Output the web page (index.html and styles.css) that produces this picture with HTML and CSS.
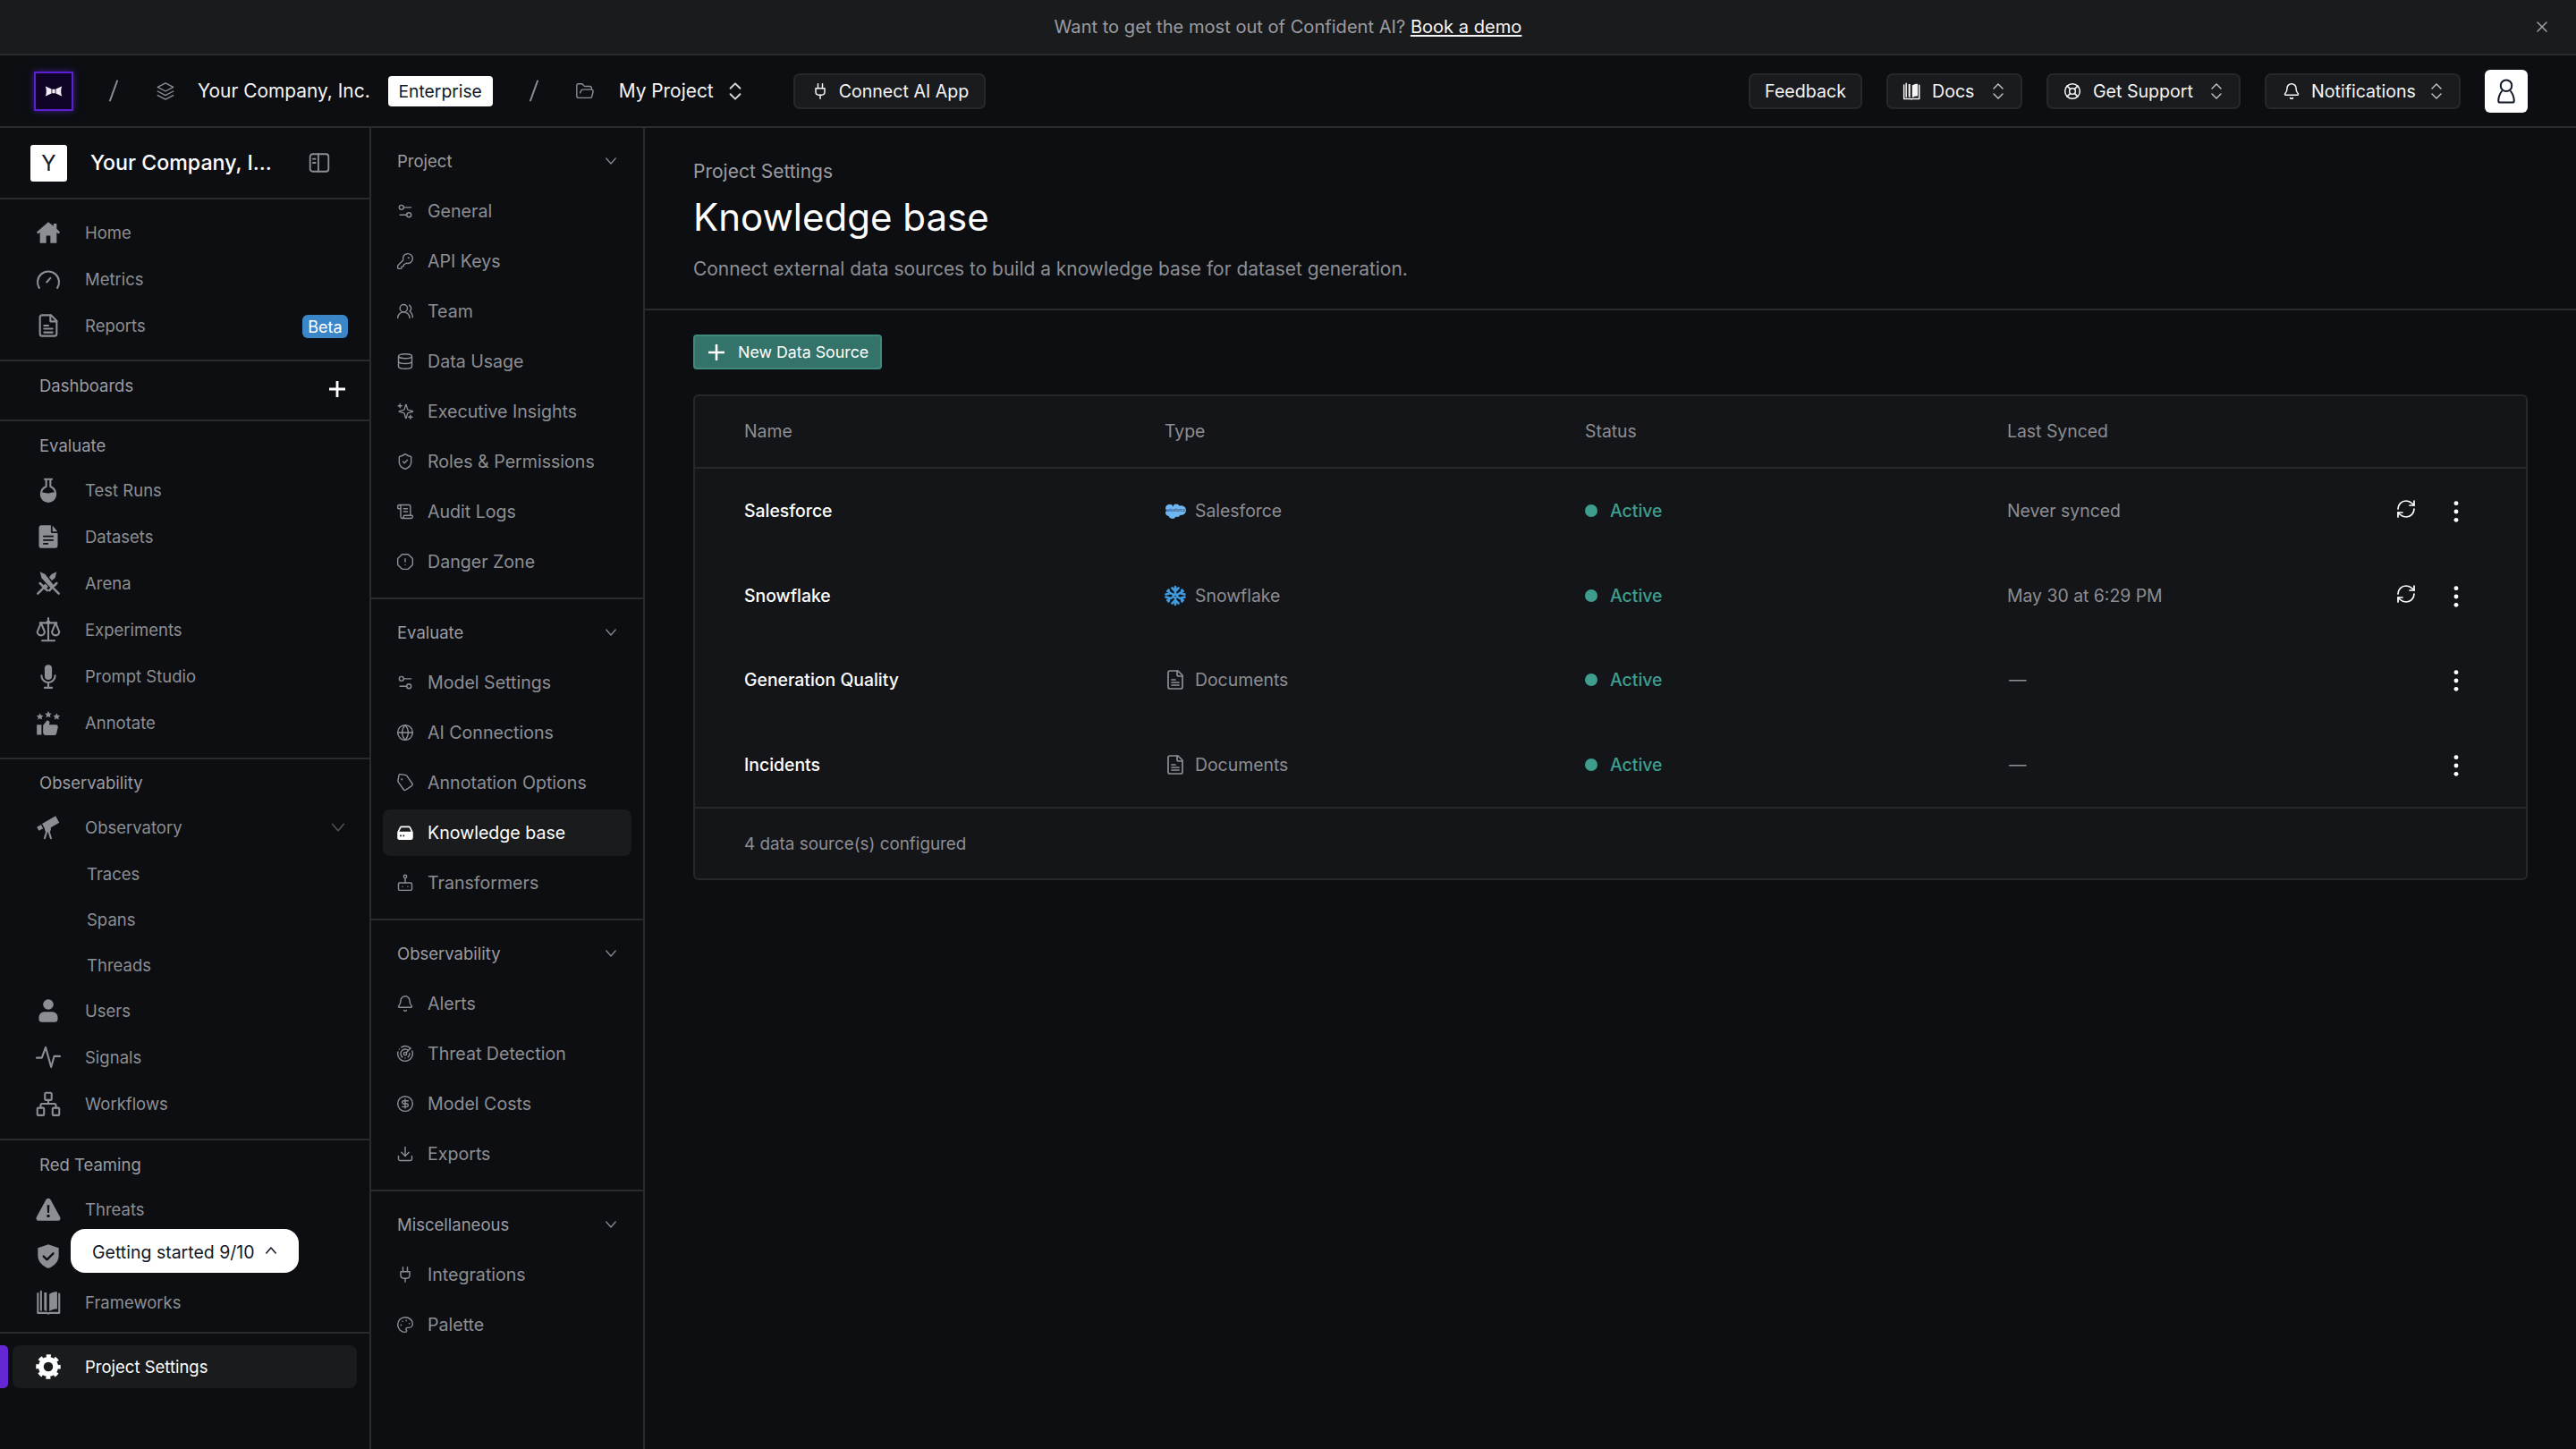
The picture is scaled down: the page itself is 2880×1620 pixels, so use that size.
FILE: index.html
```html
<!DOCTYPE html>
<html lang="en">
<head>
<meta charset="utf-8">
<title>Knowledge base</title>
<link rel="stylesheet" href="styles.css">
</head>
<body>
<svg class="sprite" xmlns="http://www.w3.org/2000/svg">
  <symbol id="x" viewBox="0 0 24 24"><path d="M18 6 6 18M6 6l12 12"/></symbol>
  <symbol id="layers" viewBox="0 0 24 24"><path d="M12 2 21.500 7 12 12 2.500 7z"/><path d="M2.500 12 12 17l9.500-5"/><path d="M2.500 17 12 22l9.500-5"/></symbol>
  <symbol id="folder" viewBox="0 0 24 24"><path d="m6 14 1.500-2.900A2 2 0 0 1 9.240 10H20a2 2 0 0 1 1.940 2.500l-1.540 6a2 2 0 0 1-1.950 1.500H4a2 2 0 0 1-2-2V5a2 2 0 0 1 2-2h3.900a2 2 0 0 1 1.690.9l.81 1.200a2 2 0 0 0 1.670.9H18a2 2 0 0 1 2 2v2"/></symbol>
  <symbol id="updown" viewBox="0 0 24 24"><path d="m7 15 5 5 5-5"/><path d="m7 9 5-5 5 5"/></symbol>
  <symbol id="chev" viewBox="0 0 24 24"><path d="m5 8 7 8 7-8"/></symbol>
  <symbol id="chevup" viewBox="0 0 24 24"><path d="m5 16 7-8 7 8"/></symbol>
  <symbol id="plug" viewBox="0 0 24 24"><path d="M12 22v-5"/><path d="M9 8V2"/><path d="M15 8V2"/><path d="M18 8v5a4 4 0 0 1-4 4h-4a4 4 0 0 1-4-4V8Z"/></symbol>
  <symbol id="buoy" viewBox="0 0 24 24"><circle cx="12" cy="12" r="10"/><path d="m4.930 4.930 4.240 4.240"/><path d="m14.830 9.170 4.240-4.240"/><path d="m14.830 14.830 4.240 4.240"/><path d="m9.170 14.830-4.240 4.240"/><circle cx="12" cy="12" r="4"/></symbol>
  <symbol id="bell" viewBox="0 0 24 24"><path d="M10.268 21a2 2 0 0 0 3.464 0"/><path d="M3.262 15.326A1 1 0 0 0 4 17h16a1 1 0 0 0 .74-1.673C19.410 13.956 18 12.499 18 8A6 6 0 0 0 6 8c0 4.499-1.411 5.956-2.738 7.326"/></symbol>
  <symbol id="person" viewBox="0 0 24 24"><circle cx="12" cy="7" r="5"/><path d="M8 12c-1.500 2-3 5-3 8.500 0 1 .5 1.500 1.500 1.500h11c1 0 1.500-.5 1.500-1.500 0-3.500-1.500-6.500-3-8.500"/></symbol>
  <symbol id="panel" viewBox="0 0 24 24"><rect x="2.500" y="3" width="19" height="18" rx="2.500"/><path d="M11 3v18"/><path d="M5.500 8H8M5.500 12H8"/></symbol>
  <symbol id="plus" viewBox="0 0 24 24"><path d="M12 3v18M3 12h18"/></symbol>

  <symbol id="home" viewBox="0 0 24 24"><path class="solid" d="M12 2 .8 11.600l1.400 1.700L4 11.800V22h6v-7h4v7h6V11.800l1.800 1.500 1.400-1.700L20 8.400V3.500h-3v2.300z"/></symbol>
  <symbol id="gauge" viewBox="0 0 24 24"><path d="M3.300 20.500a10.300 10.300 0 1 1 17.400 0"/><path d="m10.500 15 3.500-4"/></symbol>
  <symbol id="report" viewBox="0 0 24 24"><path d="M14.500 2H6a2 2 0 0 0-2 2v16a2 2 0 0 0 2 2h12a2 2 0 0 0 2-2V7.500Z"/><path d="M14 2v6h6"/><path d="M8 12h4M8 15h8M8 18.500h8"/></symbol>
  <symbol id="flask" viewBox="0 0 24 24"><path d="M8.500 1.500h7"/><path d="M10 2v6.500a8 8 0 0 0-5 7.500 7 7 0 0 0 14 0 8 8 0 0 0-5-7.500V2"/><path class="solid" d="M5 14.500c2.500-1 4.500 1 7 .5s4.500-1.500 7-.5c.5 4.500-3 8-7 8s-7.500-3.500-7-8z"/></symbol>
  <symbol id="filesolid" viewBox="0 0 24 24"><path class="solid" fill-rule="evenodd" d="M5.500 1h9v6.500a1 1 0 0 0 1 1H21v12a2.500 2.500 0 0 1-2 2.500H5.500A2.500 2.500 0 0 1 3 20.500v-17A2.500 2.500 0 0 1 5.500 1zM7 11v1.500h10V11zm0 3.500V16h10v-1.500zM7 18v1.500h5V18z"/><path class="solid" d="M16 1.200 20.800 7H16z"/></symbol>
  <symbol id="swords" viewBox="0 0 24 24"><path class="solid" d="M4 1 9 3.500 18 15l-2.800 2.500L5.500 7z"/><path class="solid" d="M20 1 15 3.500 12.800 6.400l2.600 3L18.500 7z"/><path class="solid" d="m9.300 12.500 2.700 3-3.500 3L5.800 15.500z"/><path class="thick" d="m13 19 7-7M17.500 17.500l4.500 4.500M11 19l-7-7M6.500 17.500 2 22"/></symbol>
  <symbol id="scales" viewBox="0 0 24 24"><path d="M12 1v21M6 22.500h12M4 5.500h16"/><path d="M5 5.500 1.500 14c0 2 1.500 3.500 3.500 3.500s3.500-1.500 3.500-3.500z"/><path d="M19 5.500 15.500 14c0 2 1.500 3.500 3.500 3.500s3.500-1.500 3.500-3.500z"/><circle class="solid" cx="12" cy="5" r="2"/></symbol>
  <symbol id="mic" viewBox="0 0 24 24"><rect class="solid" x="8.500" y="1" width="7" height="14.500" rx="3.500"/><path d="M5.500 11.500a6.500 6.500 0 0 0 13 0"/><path d="M12 18v5M8.500 23h7"/></symbol>
  <symbol id="annotate" viewBox="0 0 24 24"><path class="solid" d="m4 2.700 1 2.200 2.300.3-1.700 1.600.5 2.300L4 8l-2.100 1.100.5-2.300L.7 5.200 3 4.900zM12 .7l1 2.200 2.300.3-1.700 1.600.5 2.300L12 6l-2.100 1.100.5-2.300-1.700-1.600 2.300-.3zM20 2.700l1 2.200 2.300.3-1.700 1.600.5 2.300L20 8l-2.100 1.100.5-2.300-1.700-1.600 2.300-.3z"/><path class="solid" d="M1 14h4.500v9.500H1zM7 14.500l3.500-4.500c1.500-.5 2.800.5 2.800 2l-.6 2h6.500c1.500 0 2.300 1.200 2 2.500l-1.300 5.500c-.3 1.200-1.200 2-2.500 2H9.500c-1.500 0-2.500-1-2.500-2.500z"/></symbol>
  <symbol id="telescope" viewBox="0 0 24 24"><path class="solid" d="m6 8.500 13-7.500 3.500 6.500-13 7.500z"/><path class="solid" d="M1 11.700 5 9.500l2 3.600-4 2.200z"/><circle class="solid" cx="11.500" cy="13.500" r="3"/><path d="m10.500 16-2 6.500M12.500 16l2 6.500"/></symbol>
  <symbol id="user" viewBox="0 0 24 24"><circle class="solid" cx="12" cy="6" r="5"/><path class="solid" d="M8 13h8a5 5 0 0 1 5 5v2a3 3 0 0 1-3 3H6a3 3 0 0 1-3-3v-2a5 5 0 0 1 5-5z"/></symbol>
  <symbol id="signal" viewBox="0 0 24 24"><path d="M.8 12.500h5L9.500 2.500l5.200 19 3-10.500h5.500"/></symbol>
  <symbol id="flow" viewBox="0 0 24 24"><rect x="8.800" y="1.500" width="6.400" height="7" rx="1"/><rect x="1.500" y="16" width="6.400" height="7" rx="1"/><rect x="16.100" y="16" width="6.400" height="7" rx="1"/><path d="M12 8.500V12M4.700 16v-2.500a1.500 1.500 0 0 1 1.500-1.500h11.600a1.500 1.500 0 0 1 1.500 1.500V16"/></symbol>
  <symbol id="warn" viewBox="0 0 24 24"><path class="solid" fill-rule="evenodd" d="M12 1.500c1 0 1.800.6 2.300 1.500l9 16.500c.9 1.800-.3 3.500-2.300 3.500H3c-2 0-3.200-1.700-2.300-3.500L9.700 3c.5-.9 1.300-1.500 2.300-1.500zM10.800 8l.4 7.500h1.600l.4-7.500zM10.700 17.200v2.600h2.600v-2.600z"/></symbol>
  <symbol id="shieldsolid" viewBox="0 0 24 24"><path class="solid" d="M12 1 22 4.500v7c0 6-4 10-10 12.500C6 21.500 2 17.500 2 11.500v-7z"/><path class="cut" d="m7.500 12.500 3.200 3.200 6-6"/></symbol>
  <symbol id="book" viewBox="0 0 24 24"><path class="solid" d="M13 4c2.500-1.500 5-2 7.500-2v16.500c-2.500 0-5 .5-7.500 2z"/><path class="solid" d="M10.500 2.500H8v17l2.500 1z"/><path d="M5 1.500v18M2 3.500v18.700h9c.5.500 1.500.5 2 0h9.500V4"/></symbol>
  <symbol id="gear" viewBox="0 0 24 24"><circle class="gearring" cx="12" cy="12" r="7"/><circle class="gearteeth" cx="12" cy="12" r="10"/></symbol>

  <symbol id="sliders" viewBox="0 0 24 24"><path d="M20 7h-9"/><path d="M14 17H5"/><circle cx="17" cy="17" r="3"/><circle cx="7" cy="7" r="3"/></symbol>
  <symbol id="key" viewBox="0 0 24 24"><path d="M2.586 17.414A2 2 0 0 0 2 18.828V21a1 1 0 0 0 1 1h3a1 1 0 0 0 1-1v-1a1 1 0 0 1 1-1h1a1 1 0 0 0 1-1v-1a1 1 0 0 1 1-1h.172a2 2 0 0 0 1.414-.586l.814-.814a6.500 6.500 0 1 0-4-4z"/><circle cx="16.500" cy="7.500" r=".5"/></symbol>
  <symbol id="team" viewBox="0 0 24 24"><path d="M18 21a8 8 0 0 0-16 0"/><circle cx="10" cy="8" r="5"/><path d="M22 20c0-3.370-2-6.500-4-8a5 5 0 0 0-.45-8.300"/></symbol>
  <symbol id="db" viewBox="0 0 24 24"><ellipse cx="12" cy="5" rx="9" ry="3"/><path d="M3 5V19A9 3 0 0 0 21 19V5"/><path d="M3 12A9 3 0 0 0 21 12"/></symbol>
  <symbol id="spark" viewBox="0 0 24 24"><path d="M9.937 15.500A2 2 0 0 0 8.500 14.063l-6.135-1.582a.5.5 0 0 1 0-.962L8.500 9.936A2 2 0 0 0 9.937 8.500l1.582-6.135a.5.5 0 0 1 .963 0L14.063 8.500A2 2 0 0 0 15.500 9.937l6.135 1.581a.5.5 0 0 1 0 .964L15.500 14.063a2 2 0 0 0-1.437 1.437l-1.582 6.135a.5.5 0 0 1-.963 0z" transform="translate(2 1) scale(.92)"/><path d="M5 2v5M2.500 4.500h5M19 17v5M16.500 19.500h5"/></symbol>
  <symbol id="shield" viewBox="0 0 24 24"><path d="M20 13c0 5-3.500 7.500-7.660 8.950a1 1 0 0 1-.67-.01C7.500 20.500 4 18 4 13V6a1 1 0 0 1 1-1c2 0 4.500-1.200 6.240-2.720a1.170 1.170 0 0 1 1.520 0C14.510 3.810 17 5 19 5a1 1 0 0 1 1 1z"/><path d="m9 12 2 2 4-4"/></symbol>
  <symbol id="scroll" viewBox="0 0 24 24"><path d="M15 12h-5"/><path d="M15 8h-5"/><path d="M19 17V5a2 2 0 0 0-2-2H4"/><path d="M8 21h12a2 2 0 0 0 2-2v-1a1 1 0 0 0-1-1H11a1 1 0 0 0-1 1v1a2 2 0 1 1-4 0V5a2 2 0 1 0-4 0v2a1 1 0 0 0 1 1h3"/></symbol>
  <symbol id="octagon" viewBox="0 0 24 24"><path d="M12 16h.01"/><path d="M12 8v4"/><path d="M15.312 2a2 2 0 0 1 1.414.586l4.688 4.688A2 2 0 0 1 22 8.688v6.624a2 2 0 0 1-.586 1.414l-4.688 4.688a2 2 0 0 1-1.414.586H8.688a2 2 0 0 1-1.414-.586l-4.688-4.688A2 2 0 0 1 2 15.312V8.688a2 2 0 0 1 .586-1.414l4.688-4.688A2 2 0 0 1 8.688 2z"/></symbol>
  <symbol id="globe" viewBox="0 0 24 24"><circle cx="12" cy="12" r="10"/><path d="M12 2a14.500 14.500 0 0 0 0 20 14.500 14.500 0 0 0 0-20"/><path d="M2 12h20"/></symbol>
  <symbol id="tag" viewBox="0 0 24 24"><path d="M12.586 2.586A2 2 0 0 0 11.172 2H4a2 2 0 0 0-2 2v7.172a2 2 0 0 0 .586 1.414l8.704 8.704a2.426 2.426 0 0 0 3.420 0l6.580-6.580a2.426 2.426 0 0 0 0-3.420z" transform="rotate(10 12 12)"/><circle cx="7.500" cy="7.500" r=".5"/></symbol>
  <symbol id="drive" viewBox="0 0 24 24"><path class="solid" fill-rule="evenodd" d="M7.200 3h9.600a3 3 0 0 1 2.700 1.700l3 6.300v8a2.500 2.500 0 0 1-2.500 2.500H3.900A2.500 2.500 0 0 1 1.500 19v-8l3-6.300A3 3 0 0 1 7.200 3zm0 2a1 1 0 0 0-.9.600L4 10.500h16l-2.300-4.900a1 1 0 0 0-.9-.600zM5 15v2h2v-2zm4 0v2h2v-2z"/></symbol>
  <symbol id="bot" viewBox="0 0 24 24"><circle cx="12" cy="3.500" r="2"/><path d="M12 5.500V12"/><rect x="3" y="12" width="18" height="10" rx="1.500"/><path d="M8.500 17h.01M15.500 17h.01"/></symbol>
  <symbol id="radar" viewBox="0 0 24 24"><path d="M19.070 4.930A10 10 0 0 0 6.990 3.340"/><path d="M4 6h.01"/><path d="M2.290 9.620A10 10 0 1 0 21.310 8.350"/><path d="M16.240 7.760A6 6 0 1 0 8.230 16.670"/><path d="M12 18h.01"/><path d="M17.990 11.660A6 6 0 0 1 15.770 16.670"/><circle cx="12" cy="12" r="2"/><path d="m13.410 10.590 5.660-5.660"/></symbol>
  <symbol id="dollar" viewBox="0 0 24 24"><circle cx="12" cy="12" r="10"/><path d="M16 8h-6a2 2 0 1 0 0 4h4a2 2 0 1 1 0 4H8"/><path d="M12 18V6"/></symbol>
  <symbol id="download" viewBox="0 0 24 24"><path d="M12 15V3"/><path d="M21 15v4a2 2 0 0 1-2 2H5a2 2 0 0 1-2-2v-4"/><path d="m7 10 5 5 5-5"/></symbol>
  <symbol id="palette" viewBox="0 0 24 24"><path d="M12 22a1 1 0 0 1 0-20 10 9 0 0 1 10 9 5 5 0 0 1-5 5h-2.250a1.750 1.750 0 0 0-1.400 2.800l.3.4a1.750 1.750 0 0 1-1.400 2.800z"/><circle class="solid" cx="13.500" cy="6.500" r="1"/><circle class="solid" cx="17.500" cy="10.500" r="1"/><circle class="solid" cx="6.500" cy="12.500" r="1"/><circle class="solid" cx="8.500" cy="7.500" r="1"/></symbol>
  <symbol id="doc" viewBox="0 0 24 24"><path d="M15 2H6a2 2 0 0 0-2 2v16a2 2 0 0 0 2 2h12a2 2 0 0 0 2-2V7Z"/><path d="M14 2v4a2 2 0 0 0 2 2h4"/><path d="M8 12h4M8 15h8M8 18h8"/></symbol>
  <symbol id="sync" viewBox="0 0 24 24"><path d="M3 12a9 9 0 0 1 9-9 9.750 9.750 0 0 1 6.740 2.740L21 8"/><path d="M21 3v5h-5"/><path d="M21 12a9 9 0 0 1-9 9 9.750 9.750 0 0 1-6.740-2.740L3 16"/><path d="M8 16H3v5"/></symbol>
  <symbol id="dots" viewBox="0 0 24 24"><circle class="solid" cx="12" cy="4" r="2.100"/><circle class="solid" cx="12" cy="12" r="2.100"/><circle class="solid" cx="12" cy="20" r="2.100"/></symbol>
</svg>

<div class="banner">
  <p class="banner-text">Want to get the most out of Confident AI? <a class="banner-link" href="#">Book a demo</a></p>
  <svg class="ic ic-close"><use href="#x"/></svg>
</div>

<header class="topbar">
  <div class="crumbs">
    <div class="logo">
      <svg class="logo-mark" viewBox="0 0 24 16"><path d="M1 1.500 9 5v6l-8 3.500c.8-2 1.200-4.300 1.200-6.500S1.800 3.500 1 1.500zM23 1.500 15 5v6l8 3.500c-.8-2-1.200-4.300-1.200-6.500s.4-4.500 1.200-6.500zM10 5.200h4v5.600h-4z"/></svg>
    </div>
    <span class="slash slash-first"></span>
    <svg class="ic ic-crumb ic-layers"><use href="#layers"/></svg>
    <span class="crumb-name company-name">Your Company, Inc.</span>
    <span class="plan">Enterprise</span>
    <span class="slash slash-second"></span>
    <svg class="ic ic-crumb ic-folder"><use href="#folder"/></svg>
    <span class="crumb-name project-name">My Project</span>
    <svg class="ic ic-updown-lg"><use href="#updown"/></svg>
    <button class="tbtn tbtn-connect"><svg class="ic ic-tb"><use href="#plug"/></svg>Connect AI App</button>
  </div>
  <div class="actions">
    <button class="tbtn tbtn-feedback">Feedback</button>
    <button class="tbtn tbtn-docs"><svg class="ic ic-tb"><use href="#book"/></svg>Docs<svg class="ic ic-updown"><use href="#updown"/></svg></button>
    <button class="tbtn tbtn-support"><svg class="ic ic-tb"><use href="#buoy"/></svg>Get Support<svg class="ic ic-updown"><use href="#updown"/></svg></button>
    <button class="tbtn tbtn-notif"><svg class="ic ic-tb"><use href="#bell"/></svg>Notifications<svg class="ic ic-updown"><use href="#updown"/></svg></button>
    <div class="avatar"><svg class="ic ic-person"><use href="#person"/></svg></div>
  </div>
</header>

<div class="shell">
  <aside class="side">
    <div class="side-head">
      <span class="tile">Y</span>
      <span class="side-title">Your Company, I...</span>
      <svg class="ic ic-panel"><use href="#panel"/></svg>
    </div>
    <nav class="grp grp-top">
      <a class="nav"><svg class="ic ic-nav"><use href="#home"/></svg>Home</a>
      <a class="nav"><svg class="ic ic-nav"><use href="#gauge"/></svg>Metrics</a>
      <a class="nav"><svg class="ic ic-nav"><use href="#report"/></svg>Reports<span class="beta">Beta</span></a>
    </nav>
    <div class="grp-dash">
      <span class="grp-label">Dashboards</span>
      <svg class="ic ic-plus"><use href="#plus"/></svg>
    </div>
    <nav class="grp grp-eval">
      <div class="grp-label grp-label-row">Evaluate</div>
      <a class="nav"><svg class="ic ic-nav"><use href="#flask"/></svg>Test Runs</a>
      <a class="nav"><svg class="ic ic-nav"><use href="#filesolid"/></svg>Datasets</a>
      <a class="nav"><svg class="ic ic-nav"><use href="#swords"/></svg>Arena</a>
      <a class="nav"><svg class="ic ic-nav"><use href="#scales"/></svg>Experiments</a>
      <a class="nav"><svg class="ic ic-nav"><use href="#mic"/></svg>Prompt Studio</a>
      <a class="nav"><svg class="ic ic-nav"><use href="#annotate"/></svg>Annotate</a>
    </nav>
    <nav class="grp grp-obs">
      <div class="grp-label grp-label-row">Observability</div>
      <a class="nav"><svg class="ic ic-nav"><use href="#telescope"/></svg>Observatory<svg class="ic ic-obs-chev"><use href="#chev"/></svg></a>
      <a class="nav nav-sub">Traces</a>
      <a class="nav nav-sub">Spans</a>
      <a class="nav nav-sub">Threads</a>
      <a class="nav"><svg class="ic ic-nav"><use href="#user"/></svg>Users</a>
      <a class="nav"><svg class="ic ic-nav"><use href="#signal"/></svg>Signals</a>
      <a class="nav"><svg class="ic ic-nav"><use href="#flow"/></svg>Workflows</a>
    </nav>
    <nav class="grp grp-red">
      <div class="grp-label grp-label-row">Red Teaming</div>
      <a class="nav"><svg class="ic ic-nav"><use href="#warn"/></svg>Threats</a>
      <a class="nav nav-pop"><svg class="ic ic-nav ic-shield"><use href="#shieldsolid"/></svg>
        <span class="popup">Getting started 9/10<svg class="ic ic-pop"><use href="#chevup"/></svg></span>
      </a>
      <a class="nav"><svg class="ic ic-nav"><use href="#book"/></svg>Frameworks</a>
    </nav>
    <div class="grp-foot">
      <span class="active-bar"></span>
      <a class="nav nav-active"><svg class="ic ic-nav"><use href="#gear"/></svg>Project Settings</a>
    </div>
  </aside>

  <aside class="sub">
    <section class="sgrp">
      <div class="shead">Project<svg class="ic ic-chev"><use href="#chev"/></svg></div>
      <a class="sitem"><svg class="ic ic-s"><use href="#sliders"/></svg>General</a>
      <a class="sitem"><svg class="ic ic-s"><use href="#key"/></svg>API Keys</a>
      <a class="sitem"><svg class="ic ic-s"><use href="#team"/></svg>Team</a>
      <a class="sitem"><svg class="ic ic-s"><use href="#db"/></svg>Data Usage</a>
      <a class="sitem"><svg class="ic ic-s"><use href="#spark"/></svg>Executive Insights</a>
      <a class="sitem"><svg class="ic ic-s"><use href="#shield"/></svg>Roles &amp; Permissions</a>
      <a class="sitem"><svg class="ic ic-s"><use href="#scroll"/></svg>Audit Logs</a>
      <a class="sitem"><svg class="ic ic-s"><use href="#octagon"/></svg>Danger Zone</a>
    </section>
    <section class="sgrp">
      <div class="shead">Evaluate<svg class="ic ic-chev"><use href="#chev"/></svg></div>
      <a class="sitem"><svg class="ic ic-s"><use href="#sliders"/></svg>Model Settings</a>
      <a class="sitem"><svg class="ic ic-s"><use href="#globe"/></svg>AI Connections</a>
      <a class="sitem"><svg class="ic ic-s"><use href="#tag"/></svg>Annotation Options</a>
      <a class="sitem sitem-active"><svg class="ic ic-s"><use href="#drive"/></svg>Knowledge base</a>
      <a class="sitem"><svg class="ic ic-s"><use href="#bot"/></svg>Transformers</a>
    </section>
    <section class="sgrp">
      <div class="shead">Observability<svg class="ic ic-chev"><use href="#chev"/></svg></div>
      <a class="sitem"><svg class="ic ic-s"><use href="#bell"/></svg>Alerts</a>
      <a class="sitem"><svg class="ic ic-s"><use href="#radar"/></svg>Threat Detection</a>
      <a class="sitem"><svg class="ic ic-s"><use href="#dollar"/></svg>Model Costs</a>
      <a class="sitem"><svg class="ic ic-s"><use href="#download"/></svg>Exports</a>
    </section>
    <section class="sgrp sgrp-last">
      <div class="shead">Miscellaneous<svg class="ic ic-chev"><use href="#chev"/></svg></div>
      <a class="sitem"><svg class="ic ic-s"><use href="#plug"/></svg>Integrations</a>
      <a class="sitem"><svg class="ic ic-s"><use href="#palette"/></svg>Palette</a>
    </section>
  </aside>

  <main class="main">
    <header class="page-head">
      <p class="eyebrow">Project Settings</p>
      <h1 class="title">Knowledge base</h1>
      <p class="desc">Connect external data sources to build a knowledge base for dataset generation.</p>
    </header>
    <div class="content">
      <button class="new-btn"><svg class="ic ic-new"><use href="#plus"/></svg>New Data Source</button>
      <div class="card">
        <div class="row row-head">
          <span>Name</span><span>Type</span><span>Status</span><span>Last Synced</span>
        </div>
        <div class="rows">
          <div class="row">
            <span class="name">Salesforce</span>
            <span class="type">
              <svg class="brand" viewBox="0 0 24 17"><path class="sf" d="M10 2.200A4.200 4.200 0 0 1 13 1c1.600 0 3 .9 3.700 2.200.6-.3 1.300-.4 2-.4 2.900 0 5.300 2.400 5.300 5.300s-2.400 5.300-5.300 5.300c-.4 0-.7 0-1-.1a3.800 3.800 0 0 1-5 1.600A4.400 4.400 0 0 1 4.500 14.500 3.500 3.500 0 0 1 2 8.500 4 4 0 0 1 1 6a4.700 4.700 0 0 1 9-1.800z"/><text class="sf-text" x="12" y="9.500">salesforce</text></svg>
              Salesforce
            </span>
            <span class="status"><i class="dot"></i>Active</span>
            <span class="last"><span>Never synced</span><span class="acts"><svg class="ic ic-sync"><use href="#sync"/></svg><svg class="ic ic-dots"><use href="#dots"/></svg></span></span>
          </div>
          <div class="row">
            <span class="name">Snowflake</span>
            <span class="type">
              <svg class="brand brand-snow" viewBox="0 0 24 24"><path d="M12 2v7M12 15v7M3.300 7l6 3.500M14.700 13.500l6 3.500M20.700 7l-6 3.500M9.300 13.500l-6 3.500M8.500 3.500 12 7l3.500-3.500M8.500 20.500 12 17l3.500 3.500M1.500 10.500 5.500 9.500 4.500 5.500M22.500 10.500l-4-1 1-4M1.500 13.500l4 1-1 4M22.500 13.500l-4 1 1 4"/><path d="m12 9.800 2.200 2.200-2.200 2.200-2.200-2.200z"/></svg>
              Snowflake
            </span>
            <span class="status"><i class="dot"></i>Active</span>
            <span class="last"><span>May 30 at 6:29 PM</span><span class="acts"><svg class="ic ic-sync"><use href="#sync"/></svg><svg class="ic ic-dots"><use href="#dots"/></svg></span></span>
          </div>
          <div class="row">
            <span class="name">Generation Quality</span>
            <span class="type"><svg class="ic brand"><use href="#doc"/></svg>Documents</span>
            <span class="status"><i class="dot"></i>Active</span>
            <span class="last"><span class="dash">—</span><span class="acts"><svg class="ic ic-dots"><use href="#dots"/></svg></span></span>
          </div>
          <div class="row">
            <span class="name">Incidents</span>
            <span class="type"><svg class="ic brand"><use href="#doc"/></svg>Documents</span>
            <span class="status"><i class="dot"></i>Active</span>
            <span class="last"><span class="dash">—</span><span class="acts"><svg class="ic ic-dots"><use href="#dots"/></svg></span></span>
          </div>
        </div>
        <div class="card-foot">4 data source(s) configured</div>
      </div>
    </div>
  </main>
</div>
</body>
</html>
```
FILE: styles.css
```css
* { box-sizing: border-box; }
html, body { height: 100%; }
body {
  margin: 0;
  height: 1620px;
  overflow: hidden;
  display: flex;
  flex-direction: column;
  background: #0c0e12;
  color: #8d8e93;
  font-family: Inter, "Liberation Sans", sans-serif;
  font-size: 18.5px;
}
p, h1 { margin: 0; }
a { color: inherit; text-decoration: none; }
button { font: inherit; cursor: pointer; }
.sprite { display: none; }

.ic { fill: none; stroke: currentColor; stroke-width: 1.8; stroke-linecap: round; stroke-linejoin: round; flex: none; }
.solid, .ic .solid { fill: currentColor; stroke: none; }
.thick { stroke-width: 2.2; }
.cut { stroke: #0c0e12; stroke-width: 2; fill: none; }
.gearring { fill: none; stroke: currentColor; stroke-width: 5; }
.gearteeth { fill: none; stroke: currentColor; stroke-width: 3.6; stroke-dasharray: 4.2 3.65; stroke-dashoffset: 2.1; stroke-linecap: butt; }

/* banner */
.banner {
  height: 62px;
  flex: none;
  display: flex;
  align-items: center;
  justify-content: center;
  background: #1a1b1d;
  border-bottom: 2px solid #2a2b2e;
  font-size: 20.1px;
  position: relative;
}
.banner-text { color: #9b9ca1; }
.banner-link { color: #f5f5f6; text-decoration: underline; }
.ic-close { width: 20px; height: 20px; position: absolute; right: 28px; top: 20px; color: #a0a1a6; }

/* top bar */
.topbar {
  height: 81px;
  flex: none;
  display: flex;
  align-items: center;
  justify-content: space-between;
  padding: 0 54px 0 38px;
  border-bottom: 2px solid #2a2b2e;
  color: #f5f5f6;
}
.crumbs, .actions { display: flex; align-items: center; }
.logo {
  width: 44px;
  height: 44px;
  display: flex;
  align-items: center;
  justify-content: center;
  background: #0f0426;
  border: 2px solid #5a1fd1;
  box-shadow: 0 0 7px rgba(100, 40, 220, .6);
}
.logo-mark { width: 20px; height: 14px; fill: #f1eef8; }
.slash { width: 2px; height: 25px; background: #8d8e93; transform: rotate(20deg); flex: none; }
.slash-first { margin: 0 0 0 44px; }
.slash-second { margin-left: 45px; }
.ic-crumb { width: 22px; height: 22px; color: #8d8e93; stroke-width: 1.5; }
.ic-layers { margin-left: 46px; }
.ic-folder { margin-left: 45px; }
.crumb-name { font-size: 20.9px; margin-left: 25px; white-space: nowrap; }
.project-name { margin-left: 27px; }
.plan {
  margin-left: 20px;
  height: 34px;
  width: 117px;
  display: flex;
  align-items: center;
  justify-content: center;
  background: #fff;
  color: #111827;
  border-radius: 4px;
  font-size: 19.3px;
}
.ic-updown-lg { width: 26px; height: 26px; margin-left: 11px; color: #d8d8da; }
.tbtn {
  height: 40px;
  display: flex;
  align-items: center;
  background: #1a1b1e;
  border: 2px solid #27282c;
  border-radius: 7px;
  color: #f5f5f6;
  font-size: 19.6px;
  padding: 0;
  white-space: nowrap;
}
.tbtn-connect { margin-left: 52px; width: 215px; padding-left: 18px; }
.tbtn-connect .ic-tb { margin-right: 11px; }
.ic-tb { width: 20px; height: 20px; margin-right: 12px; stroke-width: 1.8; }
.actions { gap: 27px; }
.tbtn-feedback { width: 127px; justify-content: center; }
.tbtn-docs { width: 152px; padding-left: 16px; }
.tbtn-docs .ic-tb { margin-right: 13px; }
.tbtn-support { width: 217px; padding-left: 17px; }
.tbtn-support .ic-tb { margin-right: 13px; }
.tbtn-notif { width: 219px; padding-left: 18px; }
.ic-updown { width: 24px; height: 24px; margin-left: auto; margin-right: 13px; color: #c8c8cb; stroke-width: 1.4; }
.avatar {
  width: 48px;
  height: 48px;
  background: #fff;
  border-radius: 6px;
  display: flex;
  align-items: center;
  justify-content: center;
  color: #111827;
}
.ic-person { width: 30px; height: 30px; stroke-width: 1.6; }

/* shell */
.shell { flex: 1; display: flex; min-height: 0; }

/* primary sidebar */
.side { width: 415px; flex: none; border-right: 2px solid #2a2b2e; display: flex; flex-direction: column; }
.side-head {
  height: 80px;
  flex: none;
  display: flex;
  align-items: center;
  padding: 0 0 0 34px;
  border-bottom: 2px solid #2a2b2e;
  color: #fff;
}
.tile {
  width: 41px;
  height: 41px;
  border-radius: 3px;
  background: #fff;
  color: #111827;
  display: flex;
  align-items: center;
  justify-content: center;
  font-size: 24px;
}
.side-title { margin-left: 26px; font-size: 23.2px; font-weight: 500; width: 243px; white-space: nowrap; }
.ic-panel { width: 26px; height: 26px; color: #8d8e93; stroke-width: 1.7; }
.grp { border-bottom: 2px solid #2a2b2e; }
.grp-top { padding: 11px 0 12px; }
.grp-eval { padding: 12px 0 13px; }
.grp-obs { padding: 11px 0 13px; }
.grp-red { padding: 12px 0 7px; }
.grp-dash {
  height: 67px;
  display: flex;
  align-items: center;
  justify-content: space-between;
  padding: 0 24px 11px 44px;
  border-bottom: 2px solid #2a2b2e;
  flex: none;
}
.ic-plus { width: 24px; height: 24px; color: #fff; stroke-width: 2.8; margin-top: 8px; stroke-linecap: butt; }
.grp-label { color: #9b9ca1; }
.grp-label-row { height: 30px; padding-left: 44px; margin-bottom: 9px; display: flex; align-items: center; }
.nav { height: 52px; display: flex; align-items: center; padding-left: 40px; }
.ic-nav { width: 28px; height: 28px; margin-right: 27px; }
.nav-sub { padding-left: 97px; height: 51px; }
.ic-obs-chev { width: 22px; height: 22px; margin-left: auto; margin-right: 24px; color: #55565a; stroke-width: 1.6; }
.beta {
  margin-left: auto;
  margin-right: 24px;
  margin-top: 2px;
  height: 26px;
  width: 51px;
  display: flex;
  align-items: center;
  justify-content: center;
  background: #3a86c8;
  color: #fff;
  border-radius: 6px;
  font-size: 18px;
}
.nav-pop { position: relative; }
.popup {
  position: absolute;
  left: 79px;
  top: -4px;
  width: 255px;
  height: 49px;
  display: flex;
  align-items: center;
  padding: 2px 0 0 24px;
  background: #fff;
  color: #111827;
  border-radius: 16px;
  font-size: 19.5px;
  white-space: nowrap;
}
.ic-pop { width: 18px; height: 18px; margin-left: 9px; margin-top: -4px; stroke-width: 2; }
.grp-foot { position: relative; padding-top: 13px; }
.active-bar { position: absolute; left: 0; top: 13px; width: 9px; height: 48px; background: #6527d6; border-radius: 0 5px 5px 0; }
.nav-active { margin: 0 14px; height: 48px; padding-left: 26px; background: #1a1b1d; border-radius: 8px; color: #fff; }

/* secondary sidebar */
.sub { width: 306px; flex: none; border-right: 2px solid #2a2b2e; }
.sgrp { padding: 9px 0 12px; border-bottom: 2px solid #2a2b2e; }
.sgrp-last { border-bottom: 0; }
.shead, .sitem { height: 56px; display: flex; align-items: center; }
.shead { padding: 0 27px 0 29px; justify-content: space-between; color: #9b9ca1; }
.ic-chev { width: 18px; height: 18px; color: #8d8e93; stroke-width: 1.6; }
.sitem { padding-left: 28px; font-size: 19.6px; }
.ic-s { width: 20px; height: 20px; margin-right: 15px; stroke-width: 1.7; }
.sitem-active { margin: 2px 13px; height: 52px; padding-left: 15px; background: #1a1b1d; border-radius: 8px; color: #fff; }

/* main */
.main { flex: 1; min-width: 0; }
.page-head { height: 204px; padding: 33px 54px 0; border-bottom: 2px solid #2a2b2e; }
.eyebrow { font-size: 21px; line-height: 32px; color: #9b9ca1; }
.title { font-size: 42px; line-height: 60px; margin-top: 5px; font-weight: 400; color: #fff; }
.desc { font-size: 20.95px; line-height: 32px; margin-top: 12px; color: #8d8e93; }
.content { padding: 27px 54px 0; }
.new-btn {
  width: 211px;
  height: 39px;
  display: flex;
  align-items: center;
  padding: 0 0 0 12px;
  background: #33736a;
  border: 2px solid #3e8a7d;
  border-radius: 4px;
  color: #fff;
  font-size: 17.8px;
}
.ic-new { width: 24px; height: 24px; margin-right: 12px; stroke-width: 2.6; stroke-linecap: butt; }
.card { margin-top: 28px; height: 543px; background: #131519; border: 2px solid #26282c; border-radius: 6px; font-size: 19.4px; }
.row {
  display: grid;
  grid-template-columns: 470px 470px 472px 1fr;
  align-items: center;
  height: 94.5px;
  padding-left: 55px;
}
.row-head { height: 81px; border-bottom: 2px solid #26282c; padding-bottom: 2px; }
.rows { border-bottom: 2px solid #26282c; }
.name { color: #fff; font-weight: 500; }
.type { display: flex; align-items: center; }
.brand { width: 24px; height: 24px; margin-right: 10px; flex: none; }
.ic.brand { stroke-width: 1.7; }
.sf { fill: #6fb5ef; }
.sf-text { font-size: 4.500px; fill: #16325c; text-anchor: middle; font-family: Inter, sans-serif; }
.brand-snow { fill: none; stroke: #3f9be0; stroke-width: 2.600; stroke-linecap: round; stroke-linejoin: round; }
.status { display: flex; align-items: center; color: #3f9d8d; font-weight: 500; }
.dot { width: 14px; height: 14px; border-radius: 50%; background: #3f9d8d; margin-right: 14px; }
.last { display: flex; align-items: center; justify-content: space-between; padding-right: 64px; }
.dash { padding-left: 2px; }
.acts { display: flex; align-items: center; justify-content: flex-end; gap: 30px; color: #fff; }
.ic-sync { width: 24px; height: 24px; margin-top: -4px; stroke-width: 1.7; }
.ic-dots { width: 28px; height: 28px; margin-top: 2px; }
.card-foot { height: 78px; padding-left: 55px; display: flex; align-items: center; font-size: 18.85px; }
```
